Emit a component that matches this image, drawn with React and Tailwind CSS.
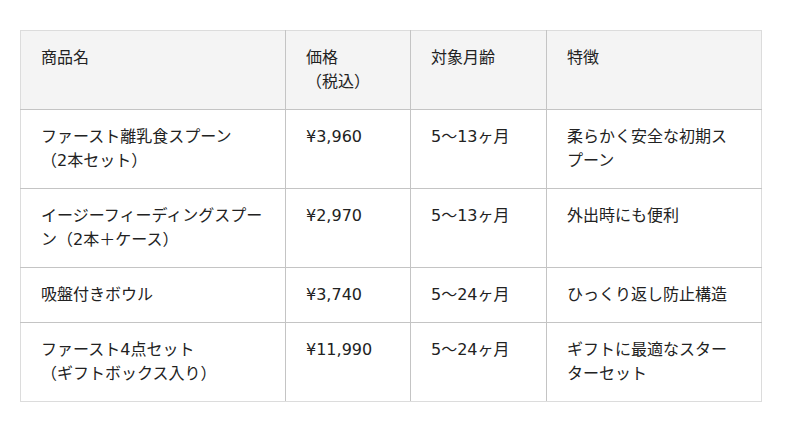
const rows = [
  { name: ['ファースト離乳食スプーン', '（2本セット）'], price: '¥3,960', age: '5〜13ヶ月', note: '柔らかく安全な初期スプーン' },
  { name: ['イージーフィーディングスプーン（2本＋ケース）'], price: '¥2,970', age: '5〜13ヶ月', note: '外出時にも便利' },
  { name: ['吸盤付きボウル'], price: '¥3,740', age: '5〜24ヶ月', note: 'ひっくり返し防止構造' },
  { name: ['ファースト4点セット', '（ギフトボックス入り）'], price: '¥11,990', age: '5〜24ヶ月', note: 'ギフトに最適なスターターセット' },
]

const cell = 'px-5 py-[15px] align-top text-left font-normal border-b border-r border-[#c4c4c4] last:border-r-[#dcdcdc]'

export default function App() {
  return (
    <div
      className="min-h-[431px] bg-white px-5 pt-[30px] text-[16px] leading-6 text-[#222]"
      style={{ fontFamily: '"DejaVu Sans", "Noto Sans CJK JP", sans-serif' }}
    >
      <table className="w-[741px] table-fixed border-collapse border border-[#dcdcdc]">
        <colgroup>
          <col className="w-[265px]" />
          <col className="w-[125px]" />
          <col className="w-[136px]" />
          <col className="w-[215px]" />
        </colgroup>
        <thead>
          <tr className="bg-[#f4f4f4]">
            <th className={cell}>商品名</th>
            <th className={cell}>価格<br />（税込）</th>
            <th className={cell}>対象月齢</th>
            <th className={cell}>特徴</th>
          </tr>
        </thead>
        <tbody>
          {rows.map((r) => (
            <tr key={r.price + r.name[0]} className="last:[&>td]:border-b-[#dcdcdc]">
              <td className={cell}>
                {r.name[0]}
                {r.name[1] && <br />}
                {r.name[1]}
              </td>
              <td className={cell}>{r.price}</td>
              <td className={cell}>{r.age}</td>
              <td className={cell}>{r.note}</td>
            </tr>
          ))}
        </tbody>
      </table>
    </div>
  )
}
